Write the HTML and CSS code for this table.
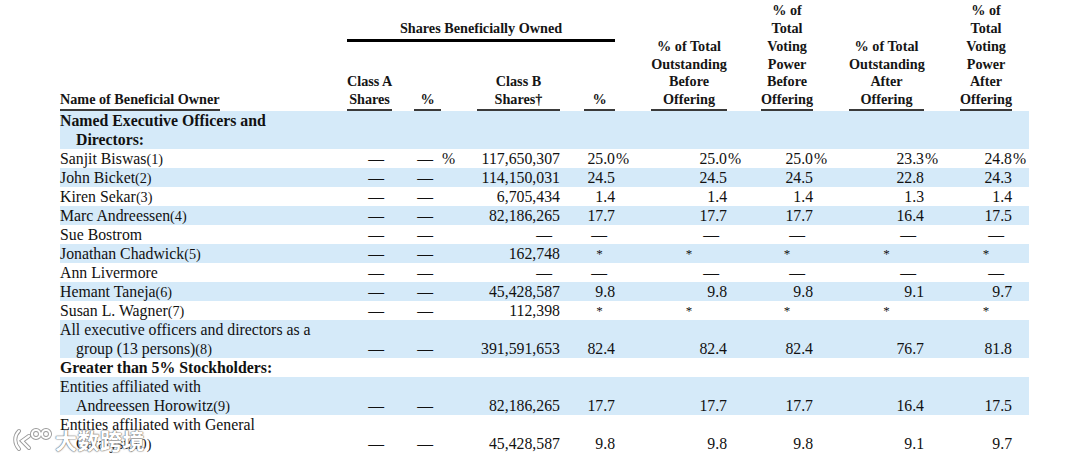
FILE: index.html
```html
<!DOCTYPE html>
<html lang="en">
<head>
<meta charset="utf-8">
<title>Beneficial Ownership</title>
<link rel="stylesheet" href="styles.css">
</head>
<body>
<div class="page">
<table class="own">
<colgroup>
<col class="c-name"><col class="c-a"><col class="c-g1"><col class="c-pa"><col class="c-sa">
<col class="c-b"><col class="c-g2"><col class="c-pb"><col class="c-sb">
<col class="c-bo"><col class="c-s1"><col class="c-vb"><col class="c-s2">
<col class="c-ao"><col class="c-s3"><col class="c-va"><col class="c-s4">
</colgroup>
<thead>
<tr class="h1">
<th rowspan="2" class="name"><span>Name of Beneficial Owner</span></th>
<th colspan="7" class="sbo">Shares Beneficially Owned</th>
<th rowspan="2"></th>
<th rowspan="2" class="ul">% of Total<br>Outstanding<br>Before<br>Offering</th>
<th rowspan="2"></th>
<th rowspan="2" class="ul">% of<br>Total<br>Voting<br>Power<br>Before<br>Offering</th>
<th rowspan="2"></th>
<th rowspan="2" class="ul">% of Total<br>Outstanding<br>After<br>Offering</th>
<th rowspan="2"></th>
<th rowspan="2" class="ul">% of<br>Total<br>Voting<br>Power<br>After<br>Offering</th>
<th rowspan="2"></th>
</tr>
<tr class="h2">
<th class="ul">Class A<br>Shares</th>
<th></th>
<th class="ul">%</th>
<th></th>
<th class="ul">Class B<br>Shares&#8224;</th>
<th></th>
<th class="ul">%</th>
</tr>
</thead>
<tbody>
<tr class="b">
<td class="lbl sec">Named Executive Officers and<br>Directors:</td>
<td></td><td></td><td></td><td></td><td></td><td></td><td></td><td></td><td></td><td></td><td></td><td></td><td></td><td></td><td></td><td></td>
</tr>
<tr>
<td class="lbl">Sanjit Biswas<span class="fn">(1)</span></td>
<td class="d">&#8212;</td><td></td><td class="d">&#8212;</td><td class="p">%</td>
<td class="n">117,650,307</td><td></td><td class="n">25.0</td><td class="p">%</td>
<td class="n">25.0</td><td class="p">%</td><td class="n">25.0</td><td class="p">%</td>
<td class="n">23.3</td><td class="p">%</td><td class="n">24.8</td><td class="p">%</td>
</tr>
<tr class="b">
<td class="lbl">John Bicket<span class="fn">(2)</span></td>
<td class="d">&#8212;</td><td></td><td class="d">&#8212;</td><td></td>
<td class="n">114,150,031</td><td></td><td class="n">24.5</td><td></td>
<td class="n">24.5</td><td></td><td class="n">24.5</td><td></td>
<td class="n">22.8</td><td></td><td class="n">24.3</td><td></td>
</tr>
<tr>
<td class="lbl">Kiren Sekar<span class="fn">(3)</span></td>
<td class="d">&#8212;</td><td></td><td class="d">&#8212;</td><td></td>
<td class="n">6,705,434</td><td></td><td class="n">1.4</td><td></td>
<td class="n">1.4</td><td></td><td class="n">1.4</td><td></td>
<td class="n">1.3</td><td></td><td class="n">1.4</td><td></td>
</tr>
<tr class="b">
<td class="lbl">Marc Andreessen<span class="fn">(4)</span></td>
<td class="d">&#8212;</td><td></td><td class="d">&#8212;</td><td></td>
<td class="n">82,186,265</td><td></td><td class="n">17.7</td><td></td>
<td class="n">17.7</td><td></td><td class="n">17.7</td><td></td>
<td class="n">16.4</td><td></td><td class="n">17.5</td><td></td>
</tr>
<tr>
<td class="lbl">Sue Bostrom</td>
<td class="d">&#8212;</td><td></td><td class="d">&#8212;</td><td></td>
<td class="d">&#8212;</td><td></td><td class="d">&#8212;</td><td></td>
<td class="d">&#8212;</td><td></td><td class="d">&#8212;</td><td></td>
<td class="d">&#8212;</td><td></td><td class="d">&#8212;</td><td></td>
</tr>
<tr class="b">
<td class="lbl">Jonathan Chadwick<span class="fn">(5)</span></td>
<td class="d">&#8212;</td><td></td><td class="d">&#8212;</td><td></td>
<td class="n">162,748</td><td></td><td class="s">*</td><td></td>
<td class="s">*</td><td></td><td class="s">*</td><td></td>
<td class="s">*</td><td></td><td class="s">*</td><td></td>
</tr>
<tr>
<td class="lbl">Ann Livermore</td>
<td class="d">&#8212;</td><td></td><td class="d">&#8212;</td><td></td>
<td class="d">&#8212;</td><td></td><td class="d">&#8212;</td><td></td>
<td class="d">&#8212;</td><td></td><td class="d">&#8212;</td><td></td>
<td class="d">&#8212;</td><td></td><td class="d">&#8212;</td><td></td>
</tr>
<tr class="b">
<td class="lbl">Hemant Taneja<span class="fn">(6)</span></td>
<td class="d">&#8212;</td><td></td><td class="d">&#8212;</td><td></td>
<td class="n">45,428,587</td><td></td><td class="n">9.8</td><td></td>
<td class="n">9.8</td><td></td><td class="n">9.8</td><td></td>
<td class="n">9.1</td><td></td><td class="n">9.7</td><td></td>
</tr>
<tr>
<td class="lbl">Susan L. Wagner<span class="fn">(7)</span></td>
<td class="d">&#8212;</td><td></td><td class="d">&#8212;</td><td></td>
<td class="n">112,398</td><td></td><td class="s">*</td><td></td>
<td class="s">*</td><td></td><td class="s">*</td><td></td>
<td class="s">*</td><td></td><td class="s">*</td><td></td>
</tr>
<tr class="b">
<td class="lbl">All executive officers and directors as a<br>group (13 persons)<span class="fn">(8)</span></td>
<td class="d">&#8212;</td><td></td><td class="d">&#8212;</td><td></td>
<td class="n">391,591,653</td><td></td><td class="n">82.4</td><td></td>
<td class="n">82.4</td><td></td><td class="n">82.4</td><td></td>
<td class="n">76.7</td><td></td><td class="n">81.8</td><td></td>
</tr>
<tr>
<td class="flat sec">Greater than 5% Stockholders:</td>
<td></td><td></td><td></td><td></td><td></td><td></td><td></td><td></td><td></td><td></td><td></td><td></td><td></td><td></td><td></td><td></td>
</tr>
<tr class="b">
<td class="lbl">Entities affiliated with<br>Andreessen Horowitz<span class="fn">(9)</span></td>
<td class="d">&#8212;</td><td></td><td class="d">&#8212;</td><td></td>
<td class="n">82,186,265</td><td></td><td class="n">17.7</td><td></td>
<td class="n">17.7</td><td></td><td class="n">17.7</td><td></td>
<td class="n">16.4</td><td></td><td class="n">17.5</td><td></td>
</tr>
<tr>
<td class="lbl">Entities affiliated with General<br>Catalyst<span class="fn">(10)</span></td>
<td class="d">&#8212;</td><td></td><td class="d">&#8212;</td><td></td>
<td class="n">45,428,587</td><td></td><td class="n">9.8</td><td></td>
<td class="n">9.8</td><td></td><td class="n">9.8</td><td></td>
<td class="n">9.1</td><td></td><td class="n">9.7</td><td></td>
</tr>
</tbody>
</table>

<div class="wm" aria-hidden="true">
<svg class="wm-logo" width="44" height="24" viewBox="0 0 44 24">
<g fill="none" stroke="#9a9a9a" stroke-width="4" stroke-linecap="round">
<path d="M9 4 C4 9 4 16 9 22"/>
<path d="M19 9 L12 14 L19 21"/>
<circle cx="26" cy="7" r="4"/>
<circle cx="36" cy="7" r="4"/>
</g>
<g fill="none" stroke="#ffffff" stroke-width="2.2" stroke-linecap="round">
<path d="M9 4 C4 9 4 16 9 22"/>
<path d="M19 9 L12 14 L19 21"/>
<circle cx="26" cy="7" r="4"/>
<circle cx="36" cy="7" r="4"/>
</g>
</svg>
<span class="wm-text">大数跨境</span>
</div>
</div>
</body>
</html>
```

FILE: styles.css
```css
* { box-sizing: border-box; }
html, body { margin: 0; padding: 0; background: #ffffff; }
body {
  font-family: "Liberation Serif", "Times New Roman", serif;
  color: #111111;
}
.page {
  position: relative;
  height: 460px;
  overflow: hidden;
  padding-left: 60px;
}
.own {
  border-collapse: separate;
  border-spacing: 0;
  table-layout: fixed;
  width: 969px;
}
.c-name { width: 287px; }
.c-a { width: 45px; }
.c-g1 { width: 22px; }
.c-pa { width: 27px; }
.c-sa { width: 36px; }
.c-b { width: 83px; }
.c-g2 { width: 24px; }
.c-pb { width: 31px; }
.c-sb { width: 36px; }
.c-bo { width: 76px; }
.c-s1 { width: 34px; }
.c-vb { width: 52px; }
.c-s2 { width: 36px; }
.c-ao { width: 75px; }
.c-s3 { width: 36px; }
.c-va { width: 52px; }
.c-s4 { width: 17px; }

th {
  font-size: 14.2px;
  font-weight: bold;
  line-height: 17.8px;
  padding: 0;
  vertical-align: bottom;
  text-align: center;
  white-space: nowrap;
  color: #151515;
}
.h1 { height: 42px; }
.h2 { height: 69px; }
th.sbo {
  border-bottom: 3px solid #000000;
  padding-bottom: 1px;
}
th.ul { border-bottom: 2px solid #3a3a3a; }
th.name { text-align: left; }
th.name span {
  display: inline-block;
  border-bottom: 2px solid #3a3a3a;
}

tbody tr { height: 19px; }
td {
  font-size: 15.8px;
  line-height: 19px;
  height: 19px;
  padding: 0;
  vertical-align: bottom;
  white-space: nowrap;
}
tr.b td { background: #d5eaf9; }
td.n { text-align: right; }
td.d { text-align: right; padding-right: 8px; }
td.s { text-align: center; font-size: 13px; }
td.p { text-align: left; padding-left: 1px; }
td.lbl {
  text-align: left;
  padding-left: 16px;
  text-indent: -16px;
}
td.flat {
  text-align: left;
  padding-left: 0;
  text-indent: 0;
}
td.sec { font-weight: bold; }
.fn { font-size: 14.2px; line-height: 1; }

.wm {
  position: absolute;
  left: 10px;
  top: 426px;
  display: flex;
  align-items: center;
  gap: 1px;
}
.wm-text {
  font-family: "Noto Sans CJK SC", sans-serif;
  font-size: 22px;
  font-weight: bold;
  line-height: 26px;
  letter-spacing: 0.5px;
  color: #ffffff;
  text-shadow: 0 0 1px #6f6f6f, 0 0 1px #6f6f6f, 0 0 2px #8f8f8f;
}
```
